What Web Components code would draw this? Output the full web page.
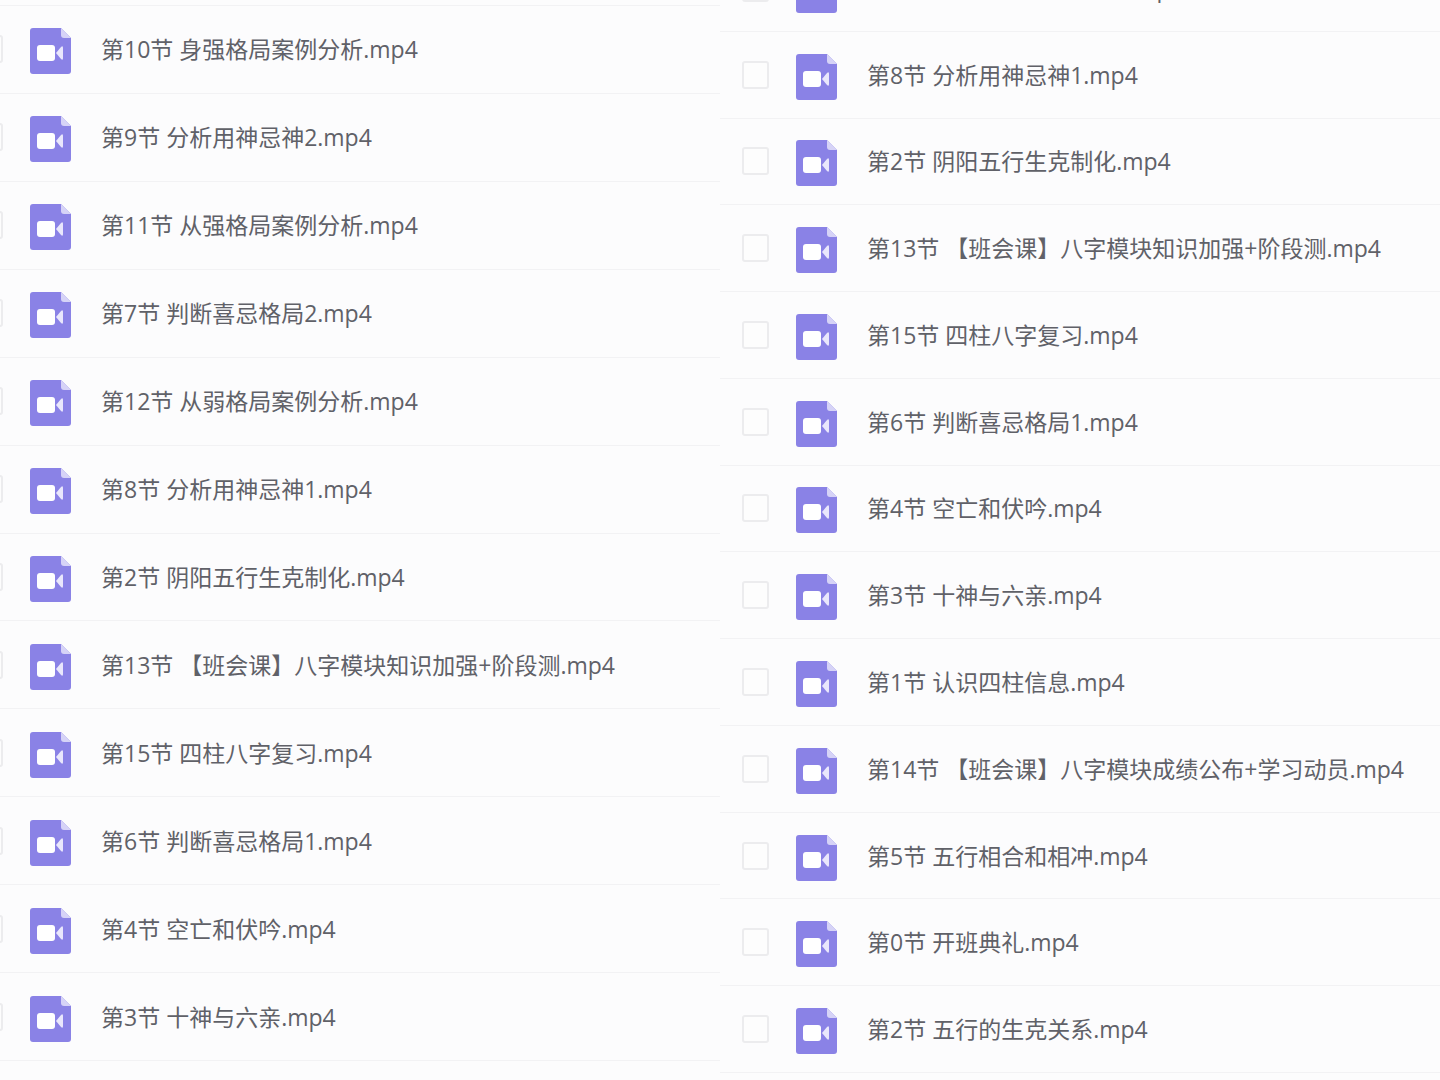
<!DOCTYPE html>
<html lang="zh-CN">
<head>
<meta charset="utf-8">
<meta name="viewport" content="width=device-width, initial-scale=1">
<title>课程文件</title>
<style>
    * { box-sizing: border-box; }
    body {
        margin: 0;
        background: #fcfcfd;
        color: #606168;
        font-family: "Open Sans", "Noto Sans CJK SC", sans-serif;
        font-size: 23px;
    }
    .page {
        display: grid;
        grid-template-columns: 1fr 1fr;
        min-height: 100vh;
        overflow: hidden;
    }
    /* Each list is scrolled to a different place */
    .first {
        --row-start: -24px;
        margin-top: 5px;
        padding-bottom: 19px;
        border-top: 1px solid #f2f2f4;
    }
    .second {
        --row-start: 22px;
        margin-top: -55px;
        padding-bottom: 7px;
    }
</style>
</head>
<body>
<main class="page">
    <file-list class="first">
        <file-row>第10节 身强格局案例分析.mp4</file-row>
        <file-row>第9节 分析用神忌神2.mp4</file-row>
        <file-row>第11节 从强格局案例分析.mp4</file-row>
        <file-row>第7节 判断喜忌格局2.mp4</file-row>
        <file-row>第12节 从弱格局案例分析.mp4</file-row>
        <file-row>第8节 分析用神忌神1.mp4</file-row>
        <file-row>第2节 阴阳五行生克制化.mp4</file-row>
        <file-row>第13节 【班会课】八字模块知识加强+阶段测.mp4</file-row>
        <file-row>第15节 四柱八字复习.mp4</file-row>
        <file-row>第6节 判断喜忌格局1.mp4</file-row>
        <file-row>第4节 空亡和伏吟.mp4</file-row>
        <file-row>第3节 十神与六亲.mp4</file-row>
    </file-list>
    <file-list class="second">
        <file-row>第12节 从弱格局案例分析.mp4</file-row>
        <file-row>第8节 分析用神忌神1.mp4</file-row>
        <file-row>第2节 阴阳五行生克制化.mp4</file-row>
        <file-row>第13节 【班会课】八字模块知识加强+阶段测.mp4</file-row>
        <file-row>第15节 四柱八字复习.mp4</file-row>
        <file-row>第6节 判断喜忌格局1.mp4</file-row>
        <file-row>第4节 空亡和伏吟.mp4</file-row>
        <file-row>第3节 十神与六亲.mp4</file-row>
        <file-row>第1节 认识四柱信息.mp4</file-row>
        <file-row>第14节 【班会课】八字模块成绩公布+学习动员.mp4</file-row>
        <file-row>第5节 五行相合和相冲.mp4</file-row>
        <file-row>第0节 开班典礼.mp4</file-row>
        <file-row>第2节 五行的生克关系.mp4</file-row>
    </file-list>
</main>

<script>
// Icon of a video file: page with a folded corner and a camera
class VideoIcon extends HTMLElement {
    constructor() {
        super();
        this.attachShadow({ mode: "open" });
    }
    connectedCallback() {
        this.shadowRoot.innerHTML = `
            <style>
                :host { display: block; flex: none; width: 41px; height: 46px; }
                svg { display: block; width: 100%; height: 100%; }
            </style>
            <svg viewBox="0 0 41 46" aria-hidden="true">
                <path fill="#8a82e6" d="M3 0H31L41 10V43Q41 46 38 46H3Q0 46 0 43V3Q0 0 3 0Z"/>
                <path fill="#d6d3f7" d="M31 0L41 10H34Q31 10 31 7Z"/>
                <rect x="7" y="17" width="18" height="16" rx="3" fill="#fff"/>
                <path fill="#e9e7fc" d="M26 25L31 19Q33 17 33 20V30Q33 33 31 31Z"/>
            </svg>
        `;
    }
}

// One line of the list: check box, icon and the name in the slot
class FileRow extends HTMLElement {
    constructor() {
        super();
        this.attachShadow({ mode: "open" });
    }
    connectedCallback() {
        this.shadowRoot.innerHTML = `
            <style>
                :host {
                    display: flex;
                    flex: 1 0 auto;
                    align-items: center;
                    box-sizing: border-box;
                    min-height: 80px;
                    padding-right: 16px;
                    border-bottom: 1px solid #f2f2f4;
                }
                input {
                    appearance: none;
                    flex: none;
                    box-sizing: border-box;
                    width: 27px;
                    height: 28px;
                    margin: 0 27px 0 var(--row-start, 0);
                    border: 2px solid #ececee;
                    border-radius: 3px;
                    background: #fdfdfd;
                }
                input:checked { background: #8a82e6; }
                video-icon { margin-top: 4px; }
                label {
                    margin-left: 30px;
                    line-height: 32px;
                    white-space: nowrap;
                }
            </style>
            <input type="checkbox" id="pick">
            <video-icon></video-icon>
            <label for="pick"><slot></slot></label>
        `;
    }
}

class FileList extends HTMLElement {
    constructor() {
        super();
        this.attachShadow({ mode: "open" });
    }
    connectedCallback() {
        this.setAttribute("role", "group");
        this.shadowRoot.innerHTML = `
            <style>
                :host { display: flex; flex-direction: column; min-width: 0; }
            </style>
            <slot></slot>
        `;
    }
}

customElements.define("video-icon", VideoIcon);
customElements.define("file-row", FileRow);
customElements.define("file-list", FileList);
</script>
</body>
</html>
